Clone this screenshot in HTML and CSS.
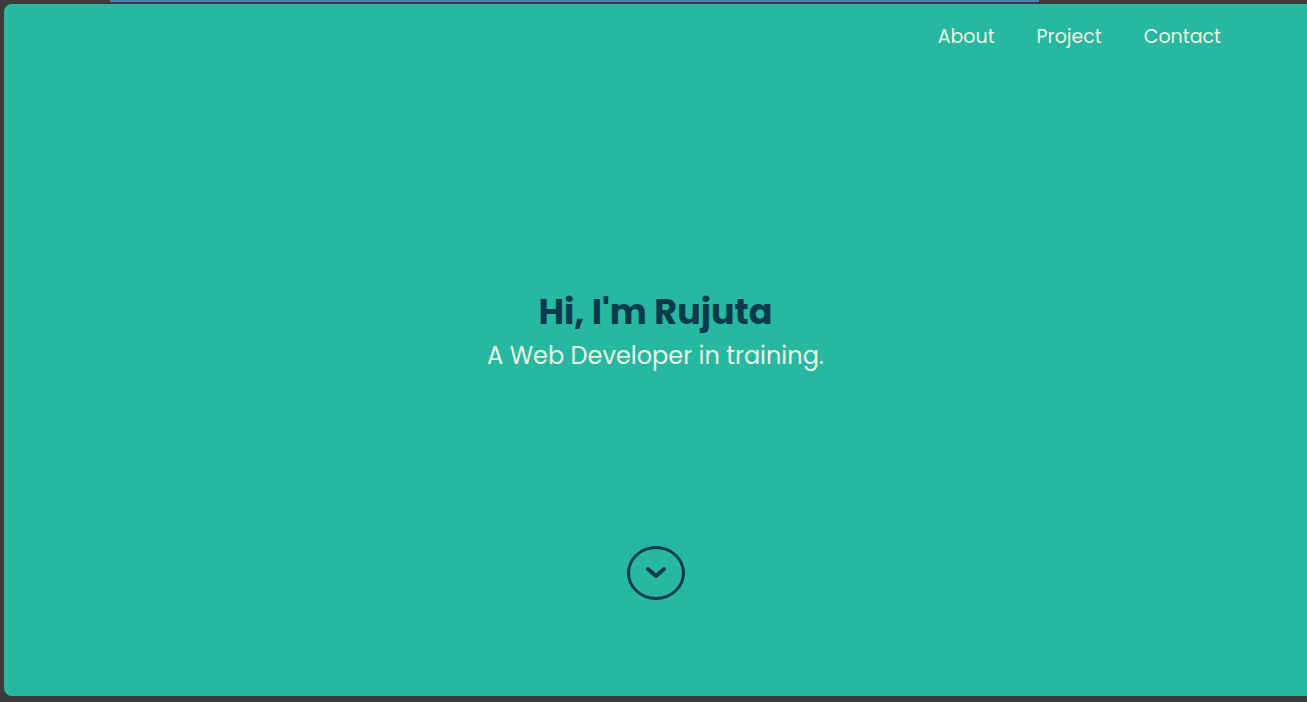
FILE: index.html
```html
<!DOCTYPE html>
<html lang="en">
<head>
<meta charset="utf-8">
<title>Rujuta</title>
<link rel="stylesheet" href="styles.css">
</head>
<body>
<div class="topstrip"><div class="tabline"></div></div>
<main class="panel">
  <nav class="nav">
    <a href="#about">About</a>
    <a href="#project">Project</a>
    <a href="#contact">Contact</a>
  </nav>
  <section class="hero">
    <h1 class="title">Hi, I'm Rujuta</h1>
    <p class="subtitle">A Web Developer in training.</p>
  </section>
  <div class="down">
    <a class="down-btn" href="#about" aria-label="Scroll down">
      <svg width="22" height="14" viewBox="0 0 22 14"><path d="M3 3 L11 10 L19 3" fill="none" stroke="#0b3a4d" stroke-width="4" stroke-linecap="round" stroke-linejoin="round"/></svg>
    </a>
  </div>
</main>
</body>
</html>
```

FILE: styles.css
```css
* { box-sizing: border-box; }
html, body { margin: 0; padding: 0; }
body {
  background: #3b3b3b;
  font-family: "Poppins", "Inter", "Noto Sans", sans-serif;
  height: 702px;
  overflow: hidden;
}
.topstrip { height: 4px; }
.tabline {
  margin-left: 110px;
  width: 929px;
  height: 2px;
  background: #4a80b8;
}
.panel {
  margin-left: 4px;
  height: 692px;
  background: #26b8a1;
  border-radius: 8px 0 0 8px;
  display: flex;
  flex-direction: column;
}
.nav {
  display: flex;
  justify-content: flex-end;
  gap: 42px;
  padding: 19px 86px 0 0;
  height: 60px;
}
.nav a {
  color: #eef1e2;
  text-decoration: none;
  font-size: 19px;
  line-height: 28px;
}
.hero {
  margin-top: 227px;
  text-align: center;
}
.title {
  margin: 0;
  color: #0b3a4d;
  font-size: 35px;
  font-weight: 700;
  line-height: 42px;
}
.subtitle {
  margin: 7px 0 0;
  color: #eef1e2;
  font-size: 24px;
  line-height: 32px;
}
.down {
  display: flex;
  justify-content: center;
  margin-top: 174px;
}
.down-btn {
  width: 58px;
  height: 54px;
  border: 3px solid #0b3a4d;
  border-radius: 50%;
  display: flex;
  align-items: center;
  justify-content: center;
}
```
